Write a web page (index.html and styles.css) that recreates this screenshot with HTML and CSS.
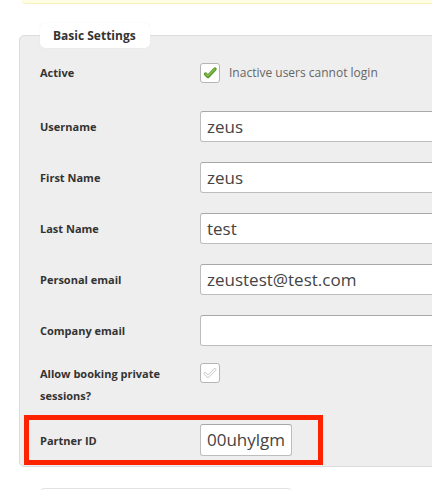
FILE: index.html
```html
<!DOCTYPE html>
<html>
<head>
<meta charset="utf-8">
<link rel="stylesheet" href="styles.css">
</head>
<body>
<div class="notice"></div>
<div class="panel">
  <div class="legend">Basic Settings</div>
  <div class="row first">
    <div class="label">Active</div>
    <span class="check">
      <svg width="18" height="18" viewBox="0 0 18 18"><path d="M4.5 10 L7 12.5 L14 5" fill="none" stroke="#5a9a2c" stroke-width="3.4" stroke-linecap="round" stroke-linejoin="round"/><path d="M5 10 L7 11.8 L13.6 5.2" fill="none" stroke="#8cc458" stroke-width="1.2" stroke-linecap="round"/></svg>
    </span>
    <span class="hint">Inactive users cannot login</span>
  </div>
  <div class="row">
    <div class="label">Username</div>
    <div class="input">zeus</div>
  </div>
  <div class="row">
    <div class="label">First Name</div>
    <div class="input">zeus</div>
  </div>
  <div class="row">
    <div class="label">Last Name</div>
    <div class="input">test</div>
  </div>
  <div class="row">
    <div class="label">Personal email</div>
    <div class="input">zeustest@test.com</div>
  </div>
  <div class="row">
    <div class="label">Company email</div>
    <div class="input"></div>
  </div>
  <div class="row row-top">
    <div class="label tall">Allow booking private sessions?</div>
    <span class="check">
      <svg width="18" height="18" viewBox="0 0 18 18"><path d="M4 9.5 L7 12.5 L14 5.5" fill="none" stroke="#c8c8c8" stroke-width="3" stroke-linecap="round" stroke-linejoin="round"/><path d="M4 9.5 L7 12.5 L14 5.5" fill="none" stroke="#fff" stroke-width="1.4" stroke-linecap="round" stroke-linejoin="round"/></svg>
    </span>
  </div>
  <div class="row partner">
    <div class="label">Partner ID</div>
    <div class="input short">00uhylgm</div>
  </div>
</div>
<div class="next"></div>
</body>
</html>
```
FILE: styles.css
```css
html, body {
  margin: 0;
  padding: 0;
  background: #fff;
  overflow: hidden;
  width: 432px;
  height: 490px;
  font-family: "Open Sans", "DejaVu Sans", sans-serif;
}
.notice {
  margin-left: 22px;
  width: 420px;
  height: 3px;
  background: #fffde2;
  border-bottom: 1px solid #f6f0c0;
  border-bottom-left-radius: 4px;
}
.panel {
  margin-top: 31px;
  margin-left: 19px;
  width: 520px;
  padding-bottom: 1px;
  background: #eeeeee;
  border: 1px solid #dcdcdc;
  border-radius: 5px;
}
.legend {
  margin-top: -13px;
  margin-left: 20px;
  width: 97px;
  height: 25px;
  padding-left: 13px;
  background: #fff;
  border-radius: 5px;
  box-shadow: 0 0 1px rgba(0,0,0,0.12);
  font-size: 12px;
  font-weight: bold;
  line-height: 25px;
  color: #333;
}
.row {
  display: flex;
  align-items: center;
  padding: 10px 0 10px 20px;
  min-height: 31px;
}
.row.first {
  padding-top: 9px;
  padding-bottom: 13px;
}
.label {
  width: 160px;
  flex: none;
  font-size: 11px;
  font-weight: bold;
  color: #333;
}
.input {
  box-sizing: border-box;
  width: 300px;
  height: 31px;
  padding-left: 6px;
  background: #fff;
  border: 1px solid #bdbdbd;
  border-top-color: #a8a8a8;
  border-radius: 3px;
  font-size: 17px;
  line-height: 29px;
  color: #444;
  white-space: nowrap;
  overflow: hidden;
}
.check {
  box-sizing: border-box;
  width: 20px;
  height: 20px;
  flex: none;
  display: flex;
  align-items: center;
  justify-content: center;
  background: #fff;
  border: 1px solid #b5b5b5;
  border-radius: 3px;
}
.hint {
  margin-left: 9px;
  font-size: 12px;
  color: #666;
}
.row-top {
  align-items: flex-start;
  padding-top: 7px;
  padding-bottom: 8px;
}
.label.tall {
  width: 140px;
  margin-right: 20px;
  line-height: 22px;
}
.partner {
  margin-left: 4px;
  width: 299px;
  box-sizing: border-box;
  border: 5px solid #ff2200;
  padding: 0 0 0 11px;
  height: 50px;
  min-height: 0;
}
.input.short {
  width: 92px;
  height: 32px;
}
.next {
  margin-top: 21px;
  margin-left: 40px;
  width: 250px;
  height: 20px;
  border: 1px solid #e2e2e2;
  border-radius: 4px;
}
```
